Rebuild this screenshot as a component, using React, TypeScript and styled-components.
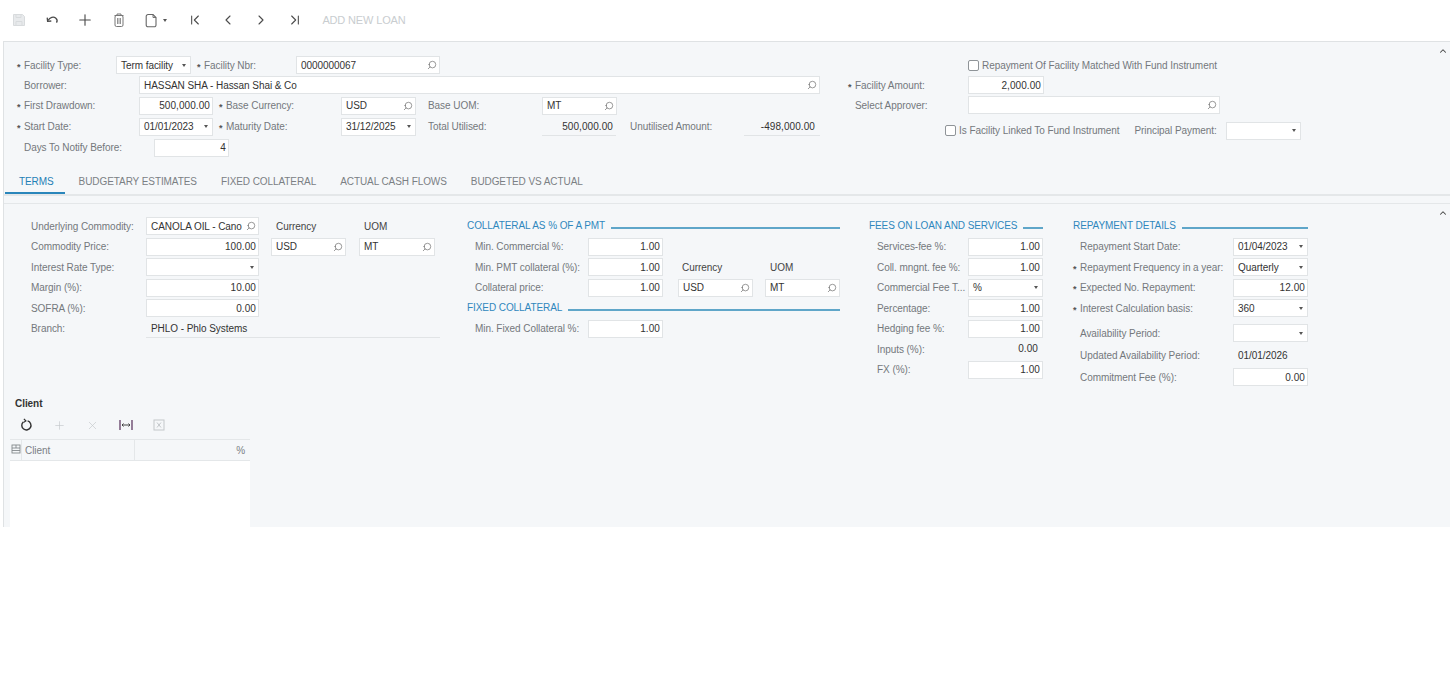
import React from "react";
import styled, { createGlobalStyle } from "styled-components";
import {
  ChevronFirst,
  ChevronLast,
  ChevronLeft,
  ChevronRight,
  ChevronUp,
  Plus,
  Search,
  X,
} from "lucide-react";

const GlobalStyle = createGlobalStyle`
  html, body {
    margin: 0;
    background: #fff;
    font-family: "Liberation Sans", Arial, sans-serif;
    font-size: 10px;
    letter-spacing: -0.06px;
    color: #333;
  }
`;

const Toolbar = styled.div`
  display: flex;
  align-items: center;
  height: 40px;
  padding-left: 2px;
  margin-bottom: 1px;
  box-sizing: border-box;
`;

const ToolButton = styled.div<{ $w?: number; $color?: string }>`
  display: flex;
  align-items: center;
  justify-content: ${(p) => (p.$w ? "flex-start" : "center")};
  padding-left: ${(p) => (p.$w ? "10px" : "0")};
  box-sizing: border-box;
  width: ${(p) => p.$w ?? 33.3}px;
  height: 100%;
  color: ${(p) => p.$color ?? "#4a4a4a"};
`;

const ToolText = styled.div`
  margin-left: 11px;
  color: #c9cdd0;
  font-size: 11px;
  letter-spacing: -0.15px;
`;

const Caret = styled.span<{ $ml?: number }>`
  display: inline-block;
  flex: none;
  width: 0;
  height: 0;
  margin-left: ${(p) => p.$ml ?? 0}px;
  border-left: 2.5px solid transparent;
  border-right: 2.5px solid transparent;
  border-top: 3px solid #555;
`;

const Panel = styled.div`
  margin-left: 3px;
  height: 486px;
  background: #f5f7f9;
  border-top: 1px solid #dfe2e4;
  border-left: 1px solid #dfe2e4;
  box-sizing: border-box;
  overflow: hidden;
`;

const Summary = styled.div`
  position: relative;
  display: flex;
  height: 126px;
  padding-top: 13px;
  box-sizing: border-box;
`;

const SummaryLeft = styled.div`
  width: 836px;
  padding-left: 13px;
  box-sizing: border-box;
  flex: none;
`;

const SummaryRight = styled.div`
  padding-left: 8px;
`;

const Collapse = styled.div<{ $top: number }>`
  position: absolute;
  right: 2px;
  top: ${(p) => p.$top}px;
  color: #444;
  line-height: 0;
`;

const Row = styled.div<{ $h?: number; $pl?: number; $mt?: number }>`
  display: flex;
  align-items: center;
  height: ${(p) => p.$h ?? 20.5}px;
  margin-top: ${(p) => p.$mt ?? 0}px;
  padding-left: ${(p) => p.$pl ?? 0}px;
`;

const Label = styled.div<{ $w: number; $ml?: number; $req?: boolean }>`
  position: relative;
  flex: none;
  width: ${(p) => p.$w}px;
  margin-left: ${(p) => p.$ml ?? 0}px;
  padding-left: 7px;
  box-sizing: border-box;
  color: #74787c;
  white-space: nowrap;
  &::before {
    content: ${(p) => (p.$req ? '"*"' : "none")};
    position: absolute;
    left: 0;
    top: 2px;
    font-size: 9px;
    color: #555;
    font-weight: bold;
  }
`;

const Field = styled.div<{ $w: number; $ml?: number; $pr: number }>`
  display: flex;
  align-items: center;
  flex: none;
  justify-content: space-between;
  width: ${(p) => p.$w}px;
  height: 18px;
  margin-left: ${(p) => p.$ml ?? 0}px;
  padding: 0 ${(p) => p.$pr}px 0 4px;
  box-sizing: border-box;
  background: #fff;
  border: 1px solid #e1e4e6;
  color: #333;
  white-space: nowrap;
  overflow: hidden;
`;

const NumField = styled(Field)`
  justify-content: flex-end;
  letter-spacing: 0.08px;
`;

const Flipped = styled(Search)`
  flex: none;
  transform: scaleX(-1);
  color: #666;
`;

const ReadOnly = styled.div<{ $w: number; $ml?: number; $line?: boolean; $pr?: number }>`
  flex: none;
  width: ${(p) => p.$w}px;
  height: 18px;
  line-height: 18px;
  margin-left: ${(p) => p.$ml ?? 0}px;
  padding: 0 ${(p) => p.$pr ?? 5}px 0 5px;
  box-sizing: border-box;
  color: #333;
  white-space: nowrap;
  border-bottom: ${(p) => (p.$line ? "1px solid #e1e4e6" : "none")};
`;

const RightText = styled(ReadOnly)`
  text-align: right;
  letter-spacing: 0.08px;
`;

const ColumnTitle = styled.div<{ $w: number; $ml?: number }>`
  flex: none;
  width: ${(p) => p.$w}px;
  margin-left: ${(p) => p.$ml ?? 0}px;
  padding-left: 5px;
  box-sizing: border-box;
  color: #444;
`;

const Check = styled.span`
  flex: none;
  width: 11px;
  height: 11px;
  margin-right: 3px;
  background: #fff;
  border: 1px solid #8f9498;
  border-radius: 2px;
  box-sizing: border-box;
`;

const CheckText = styled.div`
  color: #74787c;
  white-space: nowrap;
`;

const Tabs = styled.div`
  display: flex;
  height: 26px;
  padding-left: 1px;
  border-bottom: 2px solid #e4e7e9;
`;

const Tab = styled.div<{ $active?: boolean }>`
  display: flex;
  align-items: center;
  height: 26px;
  margin-right: ${(p) => (p.$active ? "2px" : "0")};
  padding: 2px ${(p) => (p.$active ? "11px" : "12px")} 0 ${(p) => (p.$active ? "14px" : "12px")};
  box-sizing: border-box;
  font-size: 10px;
  letter-spacing: -0.08px;
  color: ${(p) => (p.$active ? "#1f7fb6" : "#7b8084")};
  border-bottom: 2px solid ${(p) => (p.$active ? "#2a86bb" : "transparent")};
`;

const Terms = styled.div`
  position: relative;
  display: flex;
  height: 192px;
  margin-top: 7px;
  padding: 12px 0 0 20px;
  border-top: 1px solid #e4e7e9;
  box-sizing: border-box;
`;

const Column = styled.div<{ $w: number }>`
  flex: none;
  width: ${(p) => p.$w}px;
`;

const Heading = styled.div<{ $w: number }>`
  display: flex;
  align-items: center;
  width: ${(p) => p.$w}px;
  height: 20.5px;
  margin: -1px 0 1px;
  color: #2f87bd;
  font-size: 10px;
  letter-spacing: -0.08px;
  white-space: nowrap;
  &::after {
    content: "";
    flex: 1;
    height: 1.5px;
    margin: 5px 0 0 6px;
    background: #5fa6c9;
  }
`;

const ClientTitle = styled.div`
  height: 18px;
  line-height: 18px;
  padding-left: 11px;
  font-weight: bold;
  color: #333;
`;

const GridToolbar = styled.div`
  display: flex;
  align-items: center;
  height: 26px;
  padding: 0 0 2px 6px;
  box-sizing: border-box;
`;

const GridTool = styled.div<{ $color?: string }>`
  display: flex;
  align-items: center;
  justify-content: center;
  width: 33px;
  color: ${(p) => p.$color ?? "#c3c7ca"};
`;

const GridBox = styled.div`
  width: 240px;
  margin-left: 6px;
`;

const GridHead = styled.div`
  display: flex;
  height: 22px;
  border-top: 1px solid #e4e7e9;
  border-bottom: 1px solid #e4e7e9;
  box-sizing: border-box;
  color: #7b8084;
`;

const HeadCell = styled.div<{ $w?: number; $right?: boolean }>`
  display: flex;
  align-items: center;
  justify-content: ${(p) => (p.$right ? "flex-end" : "flex-start")};
  width: ${(p) => (p.$w ? `${p.$w}px` : "auto")};
  flex: ${(p) => (p.$w ? "none" : 1)};
  padding: 0 5px 0 3px;
  box-sizing: border-box;
  border-right: ${(p) => (p.$w ? "1px solid #e4e7e9" : "none")};
`;

const IconCell = styled(HeadCell)`
  align-items: flex-start;
  padding: 4px 0 0 1px;
`;

const GridBody = styled.div`
  height: 66px;
  background: #fff;
`;

const Lookup = ({ w, ml, v }: { w: number; ml?: number; v?: string }) => (
  <Field $w={w} $ml={ml} $pr={2}>
    <span>{v}</span>
    <Flipped size={10} strokeWidth={1.6} />
  </Field>
);

const Select = ({ w, ml, v }: { w: number; ml?: number; v?: string }) => (
  <Field $w={w} $ml={ml} $pr={4}>
    <span>{v}</span>
    <Caret />
  </Field>
);

const Num = ({ w, ml, v }: { w: number; ml?: number; v: string }) => (
  <NumField $w={w} $ml={ml} $pr={2}>
    {v}
  </NumField>
);

const SaveIcon = () => (
  <svg width="14" height="14" viewBox="0 0 14 14" fill="#e8eaec" stroke="#d8dbdd">
    <path d="M1.5 1.5h9l2 2v9h-11z" />
    <path d="M4 1.5v3h5v-3M4 12.5v-4h6v4" fill="none" />
  </svg>
);

const UndoIcon = () => (
  <svg width="14" height="14" viewBox="0 0 14 14" fill="none" stroke="currentColor" strokeWidth="1.3">
    <path d="M3 7.5C5 4.2 8.5 3.4 10.6 5c1.6 1.3 1.8 3.2.9 4.6" />
    <path d="M2.2 4.6 2.6 8.4 6.3 8" />
  </svg>
);

const TrashIcon = () => (
  <svg width="12" height="15" viewBox="0 0 12 15" fill="none" stroke="#777" strokeWidth="1">
    <path d="M4 2.2V1h4v1.2M1.5 2.5h9" />
    <rect x="2" y="2.5" width="8" height="11" rx="1.5" />
    <path d="M4.5 5v6M6 5v6M7.5 5v6" strokeWidth="0.8" />
  </svg>
);

const PasteIcon = () => (
  <svg width="12" height="15" viewBox="0 0 12 15" fill="none" stroke="#666" strokeWidth="1.1">
    <path d="M3 1.5h5l3 3v7.5a1.8 1.8 0 0 1-1.8 1.8H3A1.8 1.8 0 0 1 1.2 12V3.3A1.8 1.8 0 0 1 3 1.5z" />
    <path d="M8 1.5v3h3" strokeWidth="0.9" />
  </svg>
);

const RefreshIcon = () => (
  <svg width="13" height="14" viewBox="0 0 13 14" fill="none" stroke="#333" strokeWidth="1.4">
    <path d="M7.6 2.9a4.6 4.6 0 1 1-4.4 1.1" />
    <path d="M3.9 0.9 5.9 3 3.4 4.6" strokeWidth="1.2" />
  </svg>
);

const FitIcon = () => (
  <svg width="14" height="12" viewBox="0 0 14 12" fill="none" stroke="#7d5f80" strokeWidth="1.6">
    <path d="M1 1v10M13 1v10" />
    <path d="M3 6h8M4.5 4.5 3 6l1.5 1.5M9.5 4.5 11 6 9.5 7.5" strokeWidth="1" stroke="#444" />
  </svg>
);

const ExcelIcon = () => (
  <svg width="12" height="12" viewBox="0 0 12 12" fill="none" stroke="#c3c7ca">
    <rect x="1" y="1" width="10" height="10" />
    <path d="M4 3.5l4 5M8 3.5l-4 5" />
  </svg>
);

const GridIcon = () => (
  <svg width="10" height="10" viewBox="0 0 10 10" fill="none" stroke="#85898c" strokeWidth="0.9">
    <rect x="1" y="1" width="8" height="8" />
    <path d="M1 4h8M1 6.5h8M5 1v3" />
  </svg>
);

export default function App() {
  return (
    <>
      <GlobalStyle />
      <Toolbar>
        <ToolButton><SaveIcon /></ToolButton>
        <ToolButton><UndoIcon /></ToolButton>
        <ToolButton><Plus size={18} strokeWidth={1.5} /></ToolButton>
        <ToolButton><TrashIcon /></ToolButton>
        <ToolButton $w={43}>
          <PasteIcon />
          <Caret $ml={6} />
        </ToolButton>
        <ToolButton><ChevronFirst size={16} strokeWidth={1.6} /></ToolButton>
        <ToolButton><ChevronLeft size={16} strokeWidth={1.6} /></ToolButton>
        <ToolButton><ChevronRight size={16} strokeWidth={1.6} /></ToolButton>
        <ToolButton><ChevronLast size={16} strokeWidth={1.6} /></ToolButton>
        <ToolText>ADD NEW LOAN</ToolText>
      </Toolbar>

      <Panel>
        <Summary>
          <SummaryLeft>
            <Row $h={20}>
              <Label $w={99} $req>Facility Type:</Label>
              <Select w={75} v="Term facility" />
              <Label $w={99} $ml={6} $req>Facility Nbr:</Label>
              <Lookup w={144} v="0000000067" />
            </Row>
            <Row $h={20}>
              <Label $w={122}>Borrower:</Label>
              <Lookup w={681} v="HASSAN SHA - Hassan Shai & Co" />
            </Row>
            <Row $h={21}>
              <Label $w={122} $req>First Drawdown:</Label>
              <Num w={74} v="500,000.00" />
              <Label $w={122} $ml={6} $req>Base Currency:</Label>
              <Lookup w={75} v="USD" />
              <Label $w={121} $ml={5}>Base UOM:</Label>
              <Lookup w={75} v="MT" />
            </Row>
            <Row $h={21}>
              <Label $w={122} $req>Start Date:</Label>
              <Select w={74} v="01/01/2023" />
              <Label $w={122} $ml={6} $req>Maturity Date:</Label>
              <Select w={75} v="31/12/2025" />
              <Label $w={121} $ml={5}>Total Utilised:</Label>
              <RightText $w={74} $line $pr={3}>500,000.00</RightText>
              <Label $w={121} $ml={7}>Unutilised Amount:</Label>
              <RightText $w={76} $line>-498,000.00</RightText>
            </Row>
            <Row $h={21}>
              <Label $w={137}>Days To Notify Before:</Label>
              <Num w={75} v="4" />
            </Row>
          </SummaryLeft>
          <SummaryRight>
            <Row $h={20} $pl={120}>
              <Check />
              <CheckText>Repayment Of Facility Matched With Fund Instrument</CheckText>
            </Row>
            <Row $h={20}>
              <Label $w={120} $req>Facility Amount:</Label>
              <Num w={76} v="2,000.00" />
            </Row>
            <Row $h={20}>
              <Label $w={120}>Select Approver:</Label>
              <Lookup w={252} />
            </Row>
            <Row $h={31} $pl={97}>
              <Check />
              <CheckText>Is Facility Linked To Fund Instrument</CheckText>
              <Label $w={99} $ml={8}>Principal Payment:</Label>
              <Select w={75} />
            </Row>
          </SummaryRight>
          <Collapse $top={4}><ChevronUp size={10} strokeWidth={2.5} /></Collapse>
        </Summary>

        <Tabs>
          <Tab $active>TERMS</Tab>
          <Tab>BUDGETARY ESTIMATES</Tab>
          <Tab>FIXED COLLATERAL</Tab>
          <Tab>ACTUAL CASH FLOWS</Tab>
          <Tab>BUDGETED VS ACTUAL</Tab>
        </Tabs>

        <Terms>
          <Column $w={443}>
            <Row>
              <Label $w={122}>Underlying Commodity:</Label>
              <Lookup w={113} v="CANOLA OIL - Cano" />
              <ColumnTitle $w={75} $ml={12}>Currency</ColumnTitle>
              <ColumnTitle $w={75} $ml={13}>UOM</ColumnTitle>
            </Row>
            <Row>
              <Label $w={122}>Commodity Price:</Label>
              <Num w={113} v="100.00" />
              <Lookup w={75} ml={12} v="USD" />
              <Lookup w={76} ml={13} v="MT" />
            </Row>
            <Row>
              <Label $w={122}>Interest Rate Type:</Label>
              <Select w={113} />
            </Row>
            <Row>
              <Label $w={122}>Margin (%):</Label>
              <Num w={113} v="10.00" />
            </Row>
            <Row>
              <Label $w={122}>SOFRA (%):</Label>
              <Num w={113} v="0.00" />
            </Row>
            <Row>
              <Label $w={122}>Branch:</Label>
              <ReadOnly $w={294} $line>PHLO - Phlo Systems</ReadOnly>
            </Row>
          </Column>

          <Column $w={402}>
            <Heading $w={373}>COLLATERAL AS % OF A PMT</Heading>
            <Row $pl={1}>
              <Label $w={120}>Min. Commercial %:</Label>
              <Num w={75} v="1.00" />
            </Row>
            <Row $pl={1}>
              <Label $w={120}>Min. PMT collateral (%):</Label>
              <Num w={75} v="1.00" />
              <ColumnTitle $w={88} $ml={14}>Currency</ColumnTitle>
              <ColumnTitle $w={75}>UOM</ColumnTitle>
            </Row>
            <Row $pl={1}>
              <Label $w={120}>Collateral price:</Label>
              <Num w={75} v="1.00" />
              <Lookup w={75} ml={15} v="USD" />
              <Lookup w={75} ml={12} v="MT" />
            </Row>
            <Heading $w={373}>FIXED COLLATERAL</Heading>
            <Row $pl={1}>
              <Label $w={120}>Min. Fixed Collateral %:</Label>
              <Num w={75} v="1.00" />
            </Row>
          </Column>

          <Column $w={204}>
            <Heading $w={174}>FEES ON LOAN AND SERVICES</Heading>
            <Row $pl={1}>
              <Label $w={98}>Services-fee %:</Label>
              <Num w={75} v="1.00" />
            </Row>
            <Row $pl={1}>
              <Label $w={98}>Coll. mngnt. fee %:</Label>
              <Num w={75} v="1.00" />
            </Row>
            <Row $pl={1}>
              <Label $w={98}>Commercial Fee T...</Label>
              <Select w={75} v="%" />
            </Row>
            <Row $pl={1}>
              <Label $w={98}>Percentage:</Label>
              <Num w={75} v="1.00" />
            </Row>
            <Row $pl={1}>
              <Label $w={98}>Hedging fee %:</Label>
              <Num w={75} v="1.00" />
            </Row>
            <Row $pl={1}>
              <Label $w={98}>Inputs (%):</Label>
              <RightText $w={75}>0.00</RightText>
            </Row>
            <Row $pl={1}>
              <Label $w={98}>FX (%):</Label>
              <Num w={75} v="1.00" />
            </Row>
          </Column>

          <Column $w={235}>
            <Heading $w={235}>REPAYMENT DETAILS</Heading>
            <Row>
              <Label $w={160}>Repayment Start Date:</Label>
              <Select w={75} v="01/04/2023" />
            </Row>
            <Row>
              <Label $w={160} $req>Repayment Frequency in a year:</Label>
              <Select w={75} v="Quarterly" />
            </Row>
            <Row>
              <Label $w={160} $req>Expected No. Repayment:</Label>
              <Num w={75} v="12.00" />
            </Row>
            <Row>
              <Label $w={160} $req>Interest Calculation basis:</Label>
              <Select w={75} v="360" />
            </Row>
            <Row $h={21} $mt={4}>
              <Label $w={160}>Availability Period:</Label>
              <Select w={75} />
            </Row>
            <Row $h={22} $mt={1}>
              <Label $w={160}>Updated Availability Period:</Label>
              <ReadOnly $w={75}>01/01/2026</ReadOnly>
            </Row>
            <Row $h={21}>
              <Label $w={160}>Commitment Fee (%):</Label>
              <Num w={75} v="0.00" />
            </Row>
          </Column>
          <Collapse $top={4}><ChevronUp size={10} strokeWidth={2.5} /></Collapse>
        </Terms>

        <ClientTitle>Client</ClientTitle>
        <GridToolbar>
          <GridTool><RefreshIcon /></GridTool>
          <GridTool><Plus size={13} strokeWidth={1.2} /></GridTool>
          <GridTool><X size={13} strokeWidth={1.2} /></GridTool>
          <GridTool><FitIcon /></GridTool>
          <GridTool><ExcelIcon /></GridTool>
        </GridToolbar>
        <GridBox>
          <GridHead>
            <IconCell $w={12}><GridIcon /></IconCell>
            <HeadCell $w={113}>Client</HeadCell>
            <HeadCell $right>%</HeadCell>
          </GridHead>
          <GridBody />
        </GridBox>
      </Panel>
    </>
  );
}
